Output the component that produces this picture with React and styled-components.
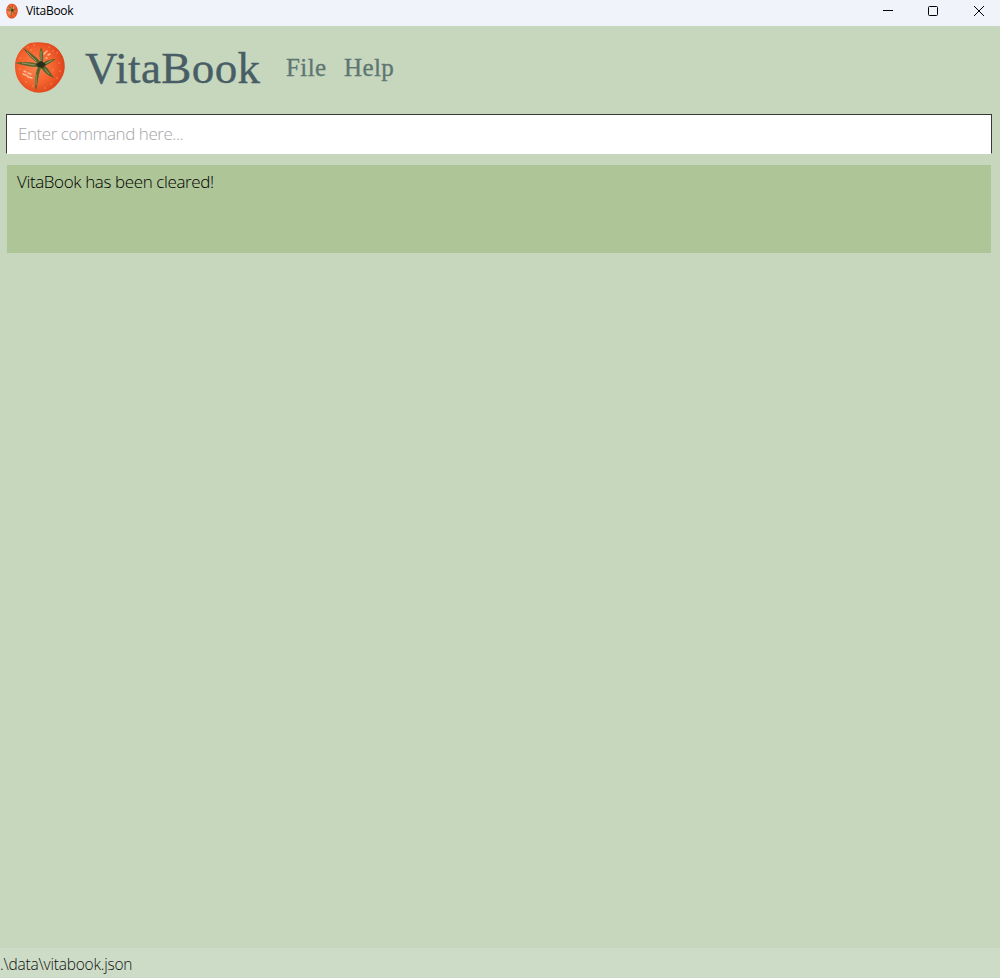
import React from 'react';
import styled, { createGlobalStyle } from 'styled-components';

const GlobalStyle = createGlobalStyle`
  * { box-sizing: border-box; }
  body { margin: 0; overflow: hidden; }
`;

const Window = styled.div`
  display: flex;
  flex-direction: column;
  height: 100vh;
  background: #c7d7bd;
  font-family: 'Open Sans', 'Noto Sans', sans-serif;
  font-weight: 300;
  color: #000;
`;

const TitleBar = styled.header`
  display: flex;
  align-items: center;
  flex: 0 0 26px;
  padding: 0 15px 5px 6px;
  background: #f0f3f9;
`;

const WindowTitle = styled.span`
  flex: 1;
  margin-left: 8px;
  font: 400 12px/20px 'Open Sans', sans-serif;
  letter-spacing: -0.3px;
`;

const WindowControls = styled.div`
  display: flex;
  gap: 34px;
`;

const Control = styled.svg`
  display: block;
  width: 12px;
  height: 12px;
  fill: none;
  stroke: #000;
`;

const Menu = styled.nav`
  display: flex;
  align-items: center;
  flex: 0 0 88px;
  padding: 0 0 6px 14px;
  font-family: Georgia, 'Liberation Serif', serif;
  white-space: nowrap;
`;

const Tomato = styled.svg`
  display: block;
  flex: none;
  width: ${(p) => p.$width}px;
  height: ${(p) => p.$height}px;
`;

const Brand = styled.h1`
  width: 176px;
  margin: 0 25px 0 19px;
  padding-top: 2px;
  font-size: 45px;
  font-weight: 400;
  line-height: 60px;
  letter-spacing: 0.4px;
  -webkit-text-stroke: 0.4px #485d66;
  color: #485d66;
`;

const MenuItem = styled.span`
  width: ${(p) => p.$width}px;
  padding-top: 2px;
  font-size: 25px;
  font-weight: 400;
  line-height: 36px;
  letter-spacing: 0.4px;
  -webkit-text-stroke: 0.3px #5d7672;
  color: #5d7672;
`;

const CommandInput = styled.input`
  flex: 0 0 40px;
  width: 986px;
  margin-left: 6px;
  padding: 0 10px 1px 11px;
  border: 1px solid #383838;
  border-bottom-color: #fff;
  border-radius: 0;
  outline: 0;
  background: #fff;
  font: 300 17px 'Open Sans', sans-serif;
  letter-spacing: -0.45px;
  &::placeholder { color: #a5a5a9; opacity: 1; }
`;

const Result = styled.section`
  flex: 0 0 88px;
  margin: 11px 9px 0 7px;
  padding: 5px 10px;
  background: #aec598;
  font-size: 17px;
  line-height: 24px;
  letter-spacing: -0.38px;
`;

const Content = styled.main`
  flex: 1;
`;

const StatusBar = styled.footer`
  flex: 0 0 30px;
  padding-top: 3px;
  background: #cddcc6;
  font-size: 15.5px;
  line-height: 26px;
  letter-spacing: -0.22px;
  color: #111;
`;

function TomatoIcon({ width, height }) {
  return (
    <Tomato $width={width} $height={height} viewBox="0 0 52 54" preserveAspectRatio="none">
      <defs>
        <radialGradient id={`skin${width}`} cx="42%" cy="48%" r="58%">
          <stop offset="0" stopColor="#f98450" />
          <stop offset=".6" stopColor="#f4622d" />
          <stop offset="1" stopColor="#dc431b" />
        </radialGradient>
      </defs>
      <path d="M16 3C21 2 27 2 32 3C40 4 46 10 49 17C52 25 51 33 47 39C43 46 37 51 30 52C22 54 14 51 9 46C3 40 1 33 1 26C1 16 7 7 16 3Z" fill={`url(#skin${width})`} />
      <g fill="none" stroke="#ffbd98" strokeLinecap="round" strokeWidth="1.4">
        <path d="M10 31l2 1M9 34l3 1M14 33l3 1M14 37l4 1M30 14l3-3M34 15l2-1M32 18l1 0M13 36l1 0" />
        <path d="M14 7h.1M20 5h.1M35 7h.1M43 13h.1M45 23h.1M46 31h.1M43 38h.1M39 30h.1M37 44h.1M19 46h.1M12 42h.1M31 48h.1M6 18h.1M6 29h.1M39 11h.1M17 10h.1" strokeWidth="1" />
      </g>
      <g fill="#59652f">
        <path d="M25 24C20 21 14 15 9 8C16 12 24 18 27 23C25 18 25 13 27 7C30 12 29 18 29 23C33 20 37 19 42 19C38 22 34 24 31 26C35 29 37 34 40 38C34 36 30 32 27 28C24 35 24 43 22 51C20 43 21 33 24 27C16 27 9 25 1 23C10 21 18 22 25 24Z" />
      </g>
      <path d="M13 12l9 9M27 11v10M38 20l-7 4M31 29l4 5M22 34v11M8 23l13 2" fill="none" stroke="#a19b66" strokeWidth=".9" />
      <path d="M22 24l5-3 5 3-3 4-5-1Z" fill="#28311c" />
    </Tomato>
  );
}

export default function App() {
  return (
    <>
      <GlobalStyle />
      <Window>
        <TitleBar>
          <TomatoIcon width={12} height={16} />
          <WindowTitle>VitaBook</WindowTitle>
          <WindowControls>
            <Control viewBox="0 0 12 12"><path d="M2 5.5h10" /></Control>
            <Control viewBox="0 0 12 12"><rect x="1.5" y="1.5" width="9" height="9" rx="1" /></Control>
            <Control viewBox="0 0 12 12"><path d="M1 1l10 10M11 1L1 11" /></Control>
          </WindowControls>
        </TitleBar>
        <Menu>
          <TomatoIcon width={52} height={54} />
          <Brand>VitaBook</Brand>
          <MenuItem $width={58}>File</MenuItem>
          <MenuItem $width={52}>Help</MenuItem>
        </Menu>
        <CommandInput placeholder="Enter command here..." />
        <Result>VitaBook has been cleared!</Result>
        <Content />
        <StatusBar>.\data\vitabook.json</StatusBar>
      </Window>
    </>
  );
}
